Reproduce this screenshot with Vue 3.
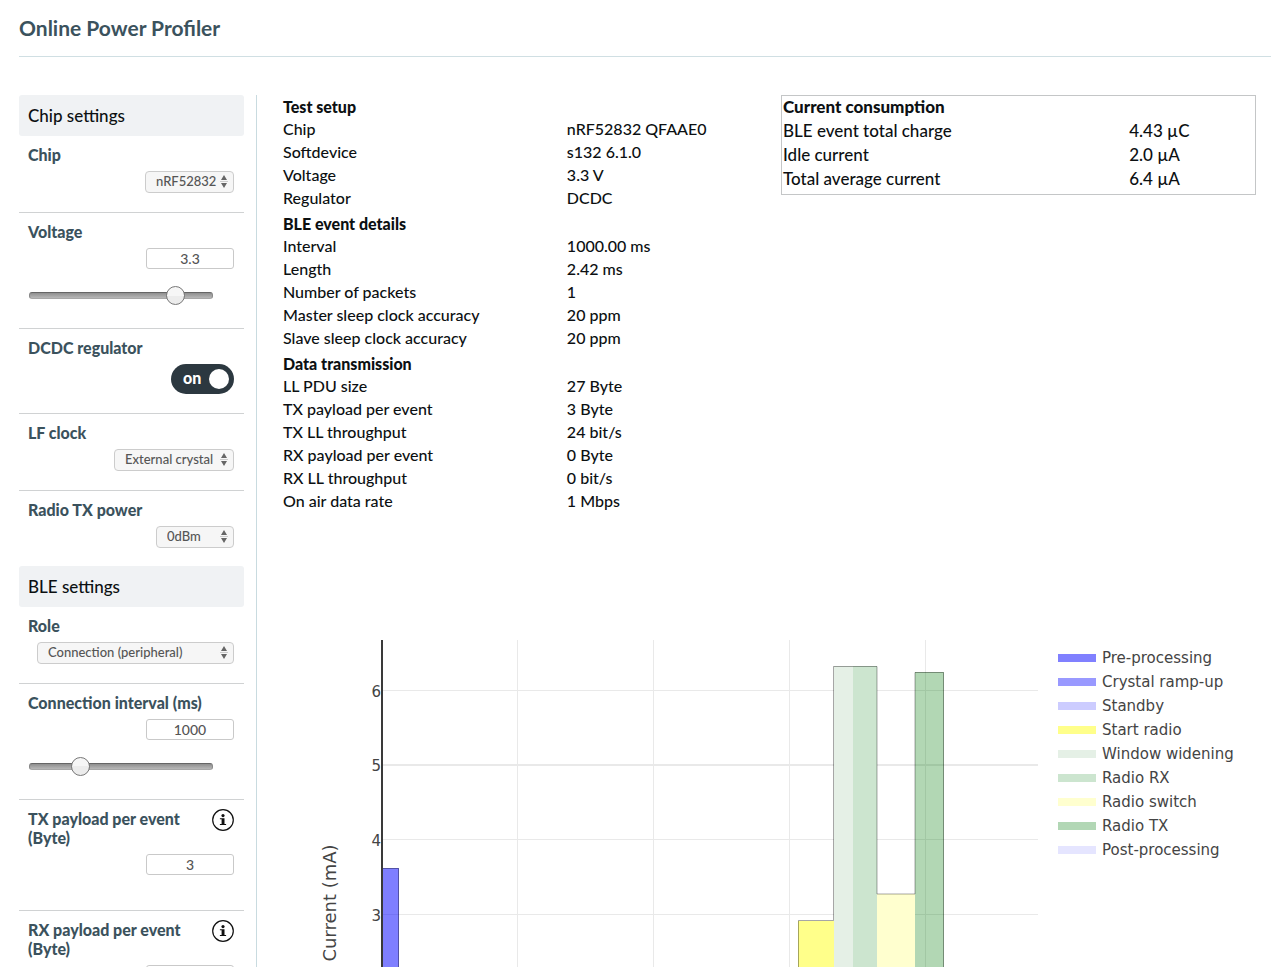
<script setup>
import { ref } from 'vue'

const voltage = ref(3.3)
const interval = ref(1000)
const dcdc = ref(true)
const txPayload = ref(3)
const rxPayload = ref(0)

const details = [
  {
    title: 'Test setup',
    rows: [
      ['Chip', 'nRF52832 QFAAE0'],
      ['Softdevice', 's132 6.1.0'],
      ['Voltage', '3.3 V'],
      ['Regulator', 'DCDC'],
    ],
  },
  {
    title: 'BLE event details',
    rows: [
      ['Interval', '1000.00 ms'],
      ['Length', '2.42 ms'],
      ['Number of packets', '1'],
      ['Master sleep clock accuracy', '20 ppm'],
      ['Slave sleep clock accuracy', '20 ppm'],
    ],
  },
  {
    title: 'Data transmission',
    rows: [
      ['LL PDU size', '27 Byte'],
      ['TX payload per event', '3 Byte'],
      ['TX LL throughput', '24 bit/s'],
      ['RX payload per event', '0 Byte'],
      ['RX LL throughput', '0 bit/s'],
      ['On air data rate', '1 Mbps'],
    ],
  },
]

const consumption = [
  ['BLE event total charge', '4.43 µC'],
  ['Idle current', '2.0 µA'],
  ['Total average current', '6.4 µA'],
]

const legend = [
  ['Pre-processing', '#8080ff'],
  ['Crystal ramp-up', '#9999ff'],
  ['Standby', '#ccccff'],
  ['Start radio', '#ffff8a'],
  ['Window widening', '#e5f0e6'],
  ['Radio RX', '#cce5cf'],
  ['Radio switch', '#ffffcf'],
  ['Radio TX', '#b2d7b5'],
  ['Post-processing', '#e5e5ff'],
]

const ticks = [
  { label: 6, y: 50.5, w: 1 },
  { label: 5, y: 125, w: 2 },
  { label: 4, y: 199.5, w: 1 },
  { label: 3, y: 274.5, w: 1 },
]
const columns = [234.5, 370.5, 506.5, 642.5]
const bars = [
  { x: 99, w: 17, y: 228, fill: 'rgba(0,0,255,0.5)' },
  { x: 515, w: 36, y: 281, fill: '#ffff8a' },
  { x: 551, w: 19, y: 26, fill: '#e5f0e6' },
  { x: 570, w: 24, y: 26, fill: '#cce5cf' },
  { x: 594, w: 38, y: 254, fill: '#ffffcf' },
  { x: 632, w: 29, y: 32, fill: 'rgba(0,122,8,0.3)' },
]
</script>

<template>
  <div class="page">
    <header class="top"><h1>Online Power Profiler</h1></header>
    <div class="body">
      <aside class="side">
        <h2>Chip settings</h2>
        <section class="field">
          <label for="chip">Chip</label>
          <div class="pick w-chip">
            <select id="chip"><option>nRF52832</option></select>
            <svg viewBox="0 0 8 13"><path d="M4 0 7 5H1zM4 13 1 8h6z" /><path d="M0 6h8v1H0z" class="mid" /></svg>
          </div>
        </section>
        <section class="field slide">
          <label for="voltage">Voltage</label>
          <input id="voltage" v-model="voltage" class="num" type="text" />
          <input v-model="voltage" class="range" type="range" min="1.8" max="3.6" step="0.1" aria-label="Voltage slider" />
        </section>
        <section class="field">
          <label for="dcdc">DCDC regulator</label>
          <div class="toggle">
            <input id="dcdc" v-model="dcdc" type="checkbox" />
            <span class="state">{{ dcdc ? 'on' : 'off' }}</span>
            <span class="knob"></span>
          </div>
        </section>
        <section class="field">
          <label for="clock">LF clock</label>
          <div class="pick w-clock">
            <select id="clock"><option>External crystal</option></select>
            <svg viewBox="0 0 8 13"><path d="M4 0 7 5H1zM4 13 1 8h6z" /><path d="M0 6h8v1H0z" class="mid" /></svg>
          </div>
        </section>
        <section class="field last">
          <label for="power">Radio TX power</label>
          <div class="pick w-power">
            <select id="power"><option>0dBm</option></select>
            <svg viewBox="0 0 8 13"><path d="M4 0 7 5H1zM4 13 1 8h6z" /><path d="M0 6h8v1H0z" class="mid" /></svg>
          </div>
        </section>

        <h2>BLE settings</h2>
        <section class="field">
          <label for="role">Role</label>
          <div class="pick w-role">
            <select id="role"><option>Connection (peripheral)</option></select>
            <svg viewBox="0 0 8 13"><path d="M4 0 7 5H1zM4 13 1 8h6z" /><path d="M0 6h8v1H0z" class="mid" /></svg>
          </div>
        </section>
        <section class="field slide">
          <label for="interval">Connection interval (ms)</label>
          <input id="interval" v-model="interval" class="num" type="text" />
          <input v-model="interval" class="range" type="range" min="7.5" max="4000" step="1.25" aria-label="Connection interval slider" />
        </section>
        <section class="field tall">
          <div class="line">
            <label for="tx">TX payload per event (Byte)</label>
            <button class="info" type="button" aria-label="About TX payload">
              <svg viewBox="0 0 22 22"><circle cx="11" cy="11" r="10.3" /><circle cx="11" cy="6.600" r="1.600" class="ink" /><path d="M7.900 9.200H12.500V15H14.100V16.100H7.900V15H9.600V10.300H7.900z" class="ink" /></svg>
            </button>
          </div>
          <input id="tx" v-model="txPayload" class="num" type="text" />
        </section>
        <section class="field tall">
          <div class="line">
            <label for="rx">RX payload per event (Byte)</label>
            <button class="info" type="button" aria-label="About RX payload">
              <svg viewBox="0 0 22 22"><circle cx="11" cy="11" r="10.3" /><circle cx="11" cy="6.600" r="1.600" class="ink" /><path d="M7.900 9.200H12.500V15H14.100V16.100H7.900V15H9.600V10.300H7.900z" class="ink" /></svg>
            </button>
          </div>
          <input id="rx" v-model="rxPayload" class="num" type="text" />
        </section>
      </aside>

      <main class="main">
        <div class="tables">
          <div class="details">
            <table v-for="group in details" :key="group.title">
              <colgroup><col class="name" /><col /></colgroup>
              <thead><tr><th colspan="2">{{ group.title }}</th></tr></thead>
              <tbody>
                <tr v-for="row in group.rows" :key="row[0]">
                  <td>{{ row[0] }}</td><td>{{ row[1] }}</td>
                </tr>
              </tbody>
            </table>
          </div>
          <div class="summary">
            <table>
              <colgroup><col class="name" /><col /></colgroup>
              <thead><tr><th colspan="2">Current consumption</th></tr></thead>
              <tbody>
                <tr v-for="row in consumption" :key="row[0]">
                  <td>{{ row[0] }}</td><td>{{ row[1] }}</td>
                </tr>
              </tbody>
            </table>
          </div>
        </div>

        <div class="chart">
          <svg class="plot" viewBox="0 0 755 500">
            <g stroke="#e9e9e9">
              <path v-for="x in columns" :key="x" :d="`M${x} 0V498`" />
              <path v-for="t in ticks" :key="t.label" :d="`M100 ${t.y}H755`" :stroke-width="t.w" />
            </g>
            <rect v-for="b in bars" :key="b.x" :x="b.x" :y="b.y" :width="b.w" :height="498 - b.y" :fill="b.fill" />
            <path class="trace" d="M99 228.500H115.500V498M515.500 498V280.500H550.500V26.500H594V254H632V32.500H660.500V498" />
            <path class="axis" d="M99 0V498" />
            <text v-for="t in ticks" :key="t.label" class="tick" x="98" :y="t.y + 6">{{ t.label }}</text>
            <text class="title" transform="translate(53 263) rotate(-90)">Current (mA)</text>
          </svg>
          <ul class="legend">
            <li v-for="item in legend" :key="item[0]">
              <svg viewBox="0 0 38 8"><rect width="38" height="8" :fill="item[1]" /></svg>{{ item[0] }}
            </li>
          </ul>
        </div>
      </main>
    </div>
  </div>
</template>

<style>
body {
  margin: 0;
  background: #fff;
}
</style>

<style scoped>
* {
  box-sizing: border-box;
}
.page {
  height: 100vh;
  overflow: hidden;
  padding-left: 19px;
  font-family: Lato, "Open Sans", sans-serif;
  font-size: 16px;
  color: #0c1012;
}
.top {
  height: 57px;
  border-bottom: 1px solid #d0dfe3;
}
h1 {
  margin: 0;
  padding-top: 14px;
  font-size: 21px;
  line-height: 28px;
  font-weight: 700;
  color: #3b525d;
}
.body {
  display: flex;
  align-items: stretch;
  padding-top: 38px;
}
.side {
  flex: 0 0 238px;
  padding-right: 12px;
  border-right: 1px solid #c9dbe0;
}
h2 {
  margin: 0;
  padding: 0 9px;
  font-size: 17px;
  line-height: 41px;
  font-weight: 500;
  background: #f0f2f4;
  border-radius: 3px;
}
.field {
  display: flex;
  flex-direction: column;
  align-items: flex-end;
  gap: 7px;
  padding: 9px 10px 19px 9px;
  border-bottom: 1px solid #d0d2d3;
}
.field.last {
  padding-bottom: 18px;
  border-bottom: 0;
}
.field.slide {
  padding-bottom: 23px;
}
.field.tall {
  padding-bottom: 35px;
}
label {
  align-self: flex-start;
  font-weight: 900;
  line-height: 19px;
  color: #3b525d;
}
.line {
  display: flex;
  justify-content: space-between;
  width: 100%;
}
.line label {
  max-width: 164px;
}
.num {
  width: 88px;
  height: 21px;
  padding: 0 0 1px;
  border: 1px solid #c9c9c9;
  border-radius: 3px;
  background: #fff;
  font: 500 14px Lato, sans-serif;
  color: #555;
  text-align: center;
}
.pick {
  position: relative;
}
.pick select {
  appearance: none;
  display: block;
  width: 100%;
  height: 22px;
  padding: 0 0 2px 10px;
  border: 1px solid #ccc;
  border-radius: 4px;
  background: #f6f6f6;
  font: 500 13px Lato, sans-serif;
  color: #555;
}
.pick svg {
  position: absolute;
  top: 4px;
  right: 6px;
  width: 8px;
  height: 13px;
  fill: #666;
  pointer-events: none;
}
.pick svg .mid {
  fill: #ccc;
}
.w-chip {
  width: 89px;
}
.w-clock {
  width: 120px;
}
.w-power {
  width: 78px;
}
.w-role {
  width: 197px;
}
.range {
  appearance: none;
  align-self: flex-start;
  width: 184px;
  height: 19px;
  margin: 10px 0 0 1px;
  background: transparent;
}
.range::-webkit-slider-runnable-track {
  height: 7px;
  border: 1px solid #888;
  border-top-color: #666;
  border-bottom-color: #a8a8a8;
  border-radius: 3px;
  background: linear-gradient(#8f8f8f, #b8b8b8);
}
.range::-webkit-slider-thumb {
  appearance: none;
  width: 19px;
  height: 19px;
  margin-top: -7px;
  border: 1px solid #777;
  border-radius: 50%;
  background: linear-gradient(#f6f6f6 0 50%, #ececec 50%);
}
.toggle {
  position: relative;
  display: flex;
  align-items: center;
  justify-content: space-between;
  width: 63px;
  height: 30px;
  padding: 0 5px 0 12px;
  border-radius: 15px;
  background: #2c3840;
  color: #fff;
  font-weight: 900;
}
.toggle input {
  position: absolute;
  inset: 0;
  width: 100%;
  height: 100%;
  margin: 0;
  opacity: 0;
}
.state {
  line-height: 28px;
  padding-bottom: 2px;
}
.knob {
  width: 20px;
  height: 20px;
  border-radius: 50%;
  background: #fff;
}
.info {
  width: 22px;
  height: 22px;
  padding: 0;
  border: 0;
  background: none;
}
.info svg {
  display: block;
  fill: none;
  stroke: #111;
  stroke-width: 1.2;
}
.info .ink {
  fill: #111;
  stroke: none;
}
.main {
  flex: 1;
  min-width: 0;
  padding: 0 15px 0 26px;
}
.tables {
  display: grid;
  grid-template-columns: 498fr 475fr;
  align-items: start;
}
table {
  width: 100%;
  table-layout: fixed;
  border-collapse: collapse;
}
th,
td {
  height: 23px;
  padding: 0;
  text-align: left;
  vertical-align: top;
  line-height: 21px;
  font-weight: 500;
}
th {
  line-height: 23px;
  font-weight: 900;
}
.details {
  display: grid;
  gap: 2px;
}
.details .name {
  width: 57%;
}
.summary {
  padding: 0 1px 2px;
  border: 1px solid #c4c6c7;
}
.summary th,
.summary td {
  height: 24px;
  font-size: 17px;
  line-height: 22px;
}
.summary .name {
  width: 73.5%;
}
.chart {
  display: flex;
  align-items: flex-start;
  gap: 20px;
  margin-top: 127px;
  font-family: Verdana, "DejaVu Sans", sans-serif;
  color: #444;
}
.plot {
  flex: 1;
  min-width: 0;
  fill: #444;
}
.trace {
  fill: none;
  stroke: rgba(0, 0, 0, 0.35);
}
.axis {
  stroke: #3a3a3a;
  stroke-width: 2;
}
.tick {
  font-size: 15px;
  text-anchor: end;
}
.title {
  font-size: 18px;
  text-anchor: middle;
}
.legend {
  flex: 0 0 198px;
  margin: 0;
  padding: 6px 0 0;
  list-style: none;
  font-size: 15px;
  line-height: 24px;
}
.legend li {
  display: flex;
  align-items: center;
  gap: 6px;
}
.legend svg {
  width: 38px;
  height: 8px;
}
</style>
